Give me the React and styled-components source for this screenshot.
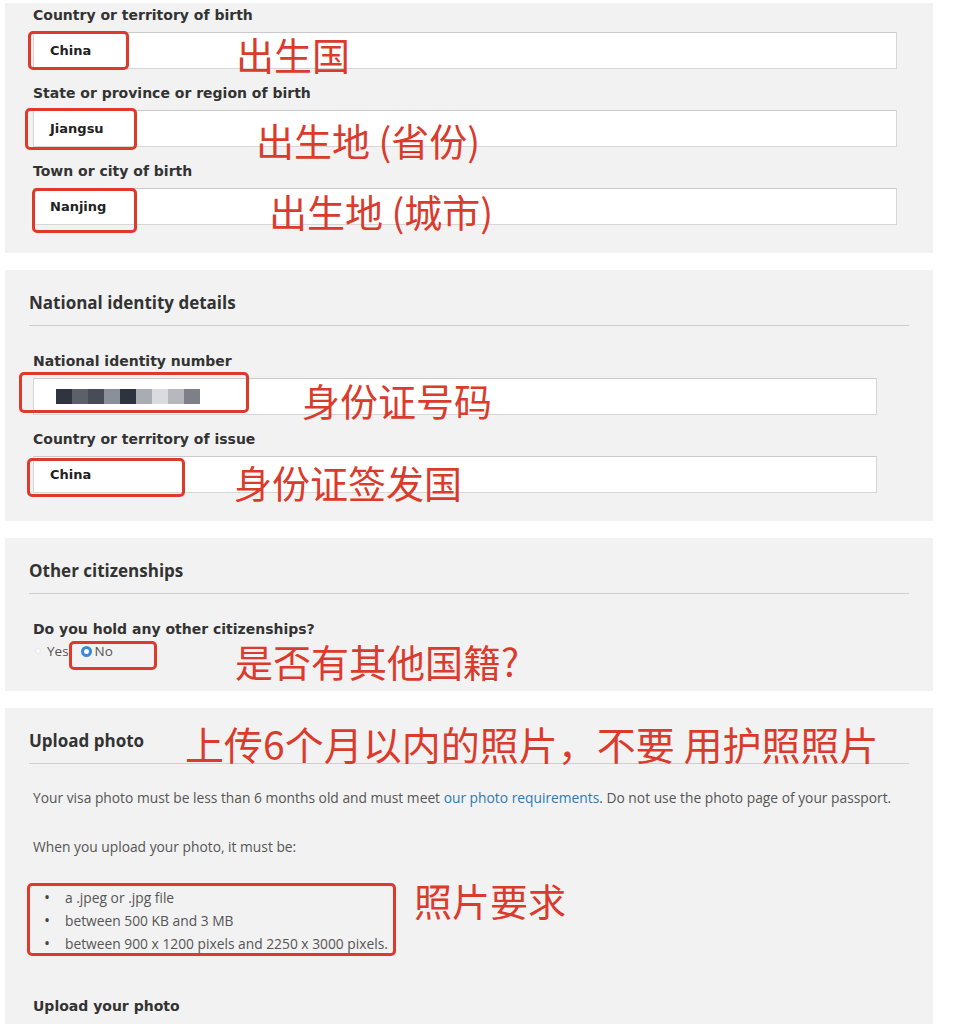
import styled, { createGlobalStyle } from 'styled-components';

const GlobalStyle = createGlobalStyle`
body {
  margin: 0;
  background: #fff;
  font-family: "Open Sans", "Liberation Sans", sans-serif;
}
`

const Page = styled.div`
  padding-top: 3px;
  width: 953px;
`

const Panel = styled.section`
  box-sizing: border-box;
  width: 928px;
  margin: 0 0 17px 5px;
  padding: ${p => p.$top ?? 22}px 24px ${p => p.$bottom ?? 28}px;
  background: #f2f2f2;
`

const SectionTitle = styled.h2`
  position: relative;
  margin: 0;
  font-family: "Open Sans", sans-serif;
  font-size: 17px;
  font-weight: 700;
  line-height: 22px;
  color: #333;
`

const Divider = styled.div`
  height: 1px;
  background: #cfcfcf;
  margin: 11px 0 ${p => p.$after ?? 27}px;
`

const Field = styled.div`
  padding-left: 4px;
  & + & {
    margin-top: 16px;
  }
`

const Label = styled.div`
  font-family: "DejaVu Sans", Verdana, sans-serif;
  font-weight: 700;
  font-size: 14px;
  line-height: 17px;
  color: #333;
  margin-bottom: ${p => p.$gap ?? 8}px;
`

const InputBox = styled.div`
  position: relative;
  box-sizing: border-box;
  width: ${p => p.$width}px;
  height: 37px;
  display: flex;
  align-items: center;
  padding-left: 16px;
  background: #fff;
  border: 1px solid #d6d6d6;
  border-top-color: #cacaca;
  font-family: "DejaVu Sans", Verdana, sans-serif;
  font-weight: 700;
  font-size: 13px;
  color: #222;
`

const Pixels = styled.div`
  display: flex;
  margin-left: 6px;
`

const Pixel = styled.span`
  width: 16px;
  height: 15px;
  background: ${p => p.$c};
`

const Mark = styled.div`
  position: absolute;
  left: ${p => p.$x}px;
  top: ${p => p.$y}px;
  width: ${p => p.$w}px;
  height: ${p => p.$h}px;
  box-sizing: border-box;
  border: 3px solid #dd3a2b;
  border-radius: 5px;
  pointer-events: none;
`

const Note = styled.span`
  position: absolute;
  left: ${p => p.$x}px;
  top: ${p => p.$y}px;
  white-space: nowrap;
  font-family: "Noto Sans CJK SC", sans-serif;
  font-weight: 400;
  font-size: ${p => p.$size ?? 38}px;
  line-height: 1;
  color: #db3b2c;
`

const RadioRow = styled.div`
  position: relative;
  display: flex;
  align-items: center;
  height: 16px;
  padding-left: 2px;
  margin-top: 5px;
  font-size: 13.5px;
  color: #555;
`

const Radio = styled.span`
  box-sizing: border-box;
  border-radius: 50%;
  width: ${p => (p.$on ? 11 : 6)}px;
  height: ${p => (p.$on ? 11 : 6)}px;
  margin-right: ${p => (p.$on ? 3 : 6)}px;
  background: ${p => (p.$on ? '#fff' : '#fdfdfd')};
  border: ${p => (p.$on ? '3.5px solid #3b8ad9' : '1px solid #e6e6e6')};
`

const RadioText = styled.span`
  margin-right: ${p => p.$gap ?? 0}px;
  line-height: 16px;
`

const Para = styled.p`
  margin: 0 0 29px 4px;
  font-size: 13.8px;
  line-height: 20px;
  color: #555;
`

const Link = styled.a`
  color: #2f79b5;
  text-decoration: none;
`

const List = styled.ul`
  position: relative;
  list-style: none;
  margin: 0 0 43px 4px;
  padding: 0;
  font-size: 13.8px;
  line-height: 22px;
  color: #555;
`

const Item = styled.li`
  &::before {
    content: "•";
    display: inline-block;
    box-sizing: border-box;
    width: 32px;
    padding-left: 11px;
    font-size: 16px;
    color: #444;
  }
`

const pixels = ['#2f3440', '#5b606b', '#474c58', '#8b8f99', '#2e3340', '#a9acb3', '#dadbde', '#b6b8bd', '#7d8089']

export default function App() {
  return (
    <Page>
      <GlobalStyle />
      <Panel $top={4}>
        <Field>
          <Label>Country or territory of birth</Label>
          <InputBox $width={864}>
            China
            <Mark $x={-6} $y={-2} $w={101} $h={39} />
            <Note $x={202} $y={2}>出生国</Note>
          </InputBox>
        </Field>
        <Field>
          <Label>State or province or region of birth</Label>
          <InputBox $width={864}>
            Jiangsu
            <Mark $x={-9} $y={-3} $w={112} $h={42} />
            <Note $x={222} $y={10}>出生地 (省份)</Note>
          </InputBox>
        </Field>
        <Field>
          <Label>Town or city of birth</Label>
          <InputBox $width={864}>
            Nanjing
            <Mark $x={-2} $y={-1} $w={105} $h={45} />
            <Note $x={235} $y={3}>出生地 (城市)</Note>
          </InputBox>
        </Field>
      </Panel>

      <Panel>
        <SectionTitle>National identity details</SectionTitle>
        <Divider />
        <Field>
          <Label>National identity number</Label>
          <InputBox $width={844}>
            <Pixels>
              {pixels.map((c, i) => <Pixel key={i} $c={c} />)}
            </Pixels>
            <Mark $x={-15} $y={-7} $w={230} $h={41} />
            <Note $x={268} $y={2}>身份证号码</Note>
          </InputBox>
        </Field>
        <Field>
          <Label>Country or territory of issue</Label>
          <InputBox $width={844}>
            China
            <Mark $x={-7} $y={1} $w={158} $h={39} />
            <Note $x={200} $y={6}>身份证签发国</Note>
          </InputBox>
        </Field>
      </Panel>

      <Panel $bottom={32}>
        <SectionTitle>Other citizenships</SectionTitle>
        <Divider />
        <Field>
          <Label $gap={0}>Do you hold any other citizenships?</Label>
          <RadioRow>
            <Radio />
            <RadioText $gap={12}>Yes</RadioText>
            <Radio $on />
            <RadioText>No</RadioText>
            <Mark $x={36} $y={-2} $w={88} $h={29} />
            <Note $x={202} $y={-1}>是否有其他国籍?</Note>
          </RadioRow>
        </Field>
      </Panel>

      <Panel $bottom={7}>
        <SectionTitle>
          Upload photo
          <Note $x={156} $y={-6} $size={39}>上传6个月以内的照片，不要 用护照照片</Note>
        </SectionTitle>
        <Divider $after={24} />
        <Para>
          Your visa photo must be less than 6 months old and must meet <Link>our photo requirements</Link>. Do not use the photo page of your passport.
        </Para>
        <Para>When you upload your photo, it must be:</Para>
        <List>
          <Item>a .jpeg or .jpg file</Item>
          <Item>between 500 KB and 3 MB</Item>
          <Item>between 900 x 1200 pixels and 2250 x 3000 pixels.</Item>
          <Mark $x={-6} $y={-3} $w={369} $h={73} />
          <Note $x={381} $y={-5}>照片要求</Note>
        </List>
        <Field>
          <Label>Upload your photo</Label>
        </Field>
      </Panel>
    </Page>
  )
}
